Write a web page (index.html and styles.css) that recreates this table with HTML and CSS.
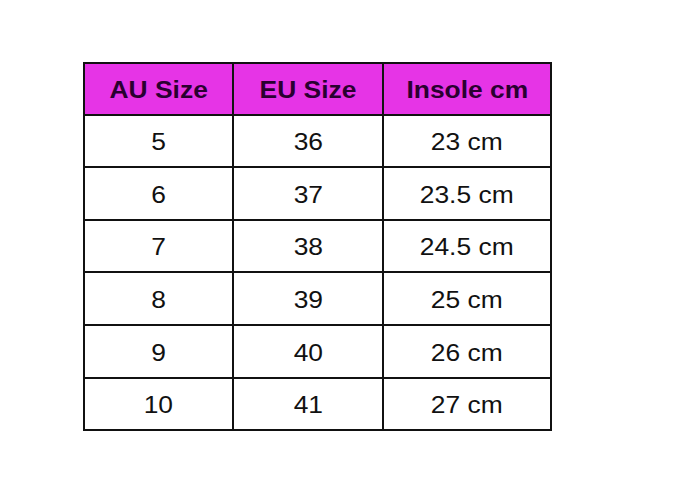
FILE: index.html
```html
<!DOCTYPE html>
<html>
<head>
<meta charset="utf-8">
<link rel="stylesheet" href="styles.css">
</head>
<body>
<table class="size-table">
  <thead>
    <tr class="head-row">
      <th class="c1"><span class="t">AU Size</span></th>
      <th class="c2"><span class="t">EU Size</span></th>
      <th class="c3"><span class="t">Insole cm</span></th>
    </tr>
  </thead>
  <tbody>
    <tr class="r52"><td><span class="t">5</span></td><td><span class="t">36</span></td><td><span class="t">23 cm</span></td></tr>
    <tr class="r53"><td><span class="t">6</span></td><td><span class="t">37</span></td><td><span class="t">23.5 cm</span></td></tr>
    <tr class="r52"><td><span class="t">7</span></td><td><span class="t">38</span></td><td><span class="t">24.5 cm</span></td></tr>
    <tr class="r53"><td><span class="t">8</span></td><td><span class="t">39</span></td><td><span class="t">25 cm</span></td></tr>
    <tr class="r53"><td><span class="t">9</span></td><td><span class="t">40</span></td><td><span class="t">26 cm</span></td></tr>
    <tr class="r52"><td><span class="t">10</span></td><td><span class="t">41</span></td><td><span class="t">27 cm</span></td></tr>
  </tbody>
</table>
</body>
</html>
```
FILE: styles.css
```css
html, body {
  margin: 0;
  padding: 0;
  background: #ffffff;
}
body {
  padding: 62px 0 0 83px;
  font-family: "Liberation Sans", Arial, sans-serif;
}
.size-table {
  border-collapse: collapse;
  border: 2px solid #111111;
  table-layout: fixed;
}
.size-table th,
.size-table td {
  border: 2px solid #111111;
  text-align: center;
  vertical-align: middle;
  padding: 2px 0 0 0;
  font-size: 24px;
  line-height: 28px;
  color: #111111;
}
.size-table th {
  background: #e634e6;
  color: #2a0030;
  font-weight: bold;
}
.c1 { width: 147px; }
.c2 { width: 148px; }
.c3 { width: 166px; }
.head-row { height: 52px; }
.r52 { height: 52px; }
.r53 { height: 53px; }
.t {
  display: inline-block;
  transform: scaleX(1.1);
}
```
